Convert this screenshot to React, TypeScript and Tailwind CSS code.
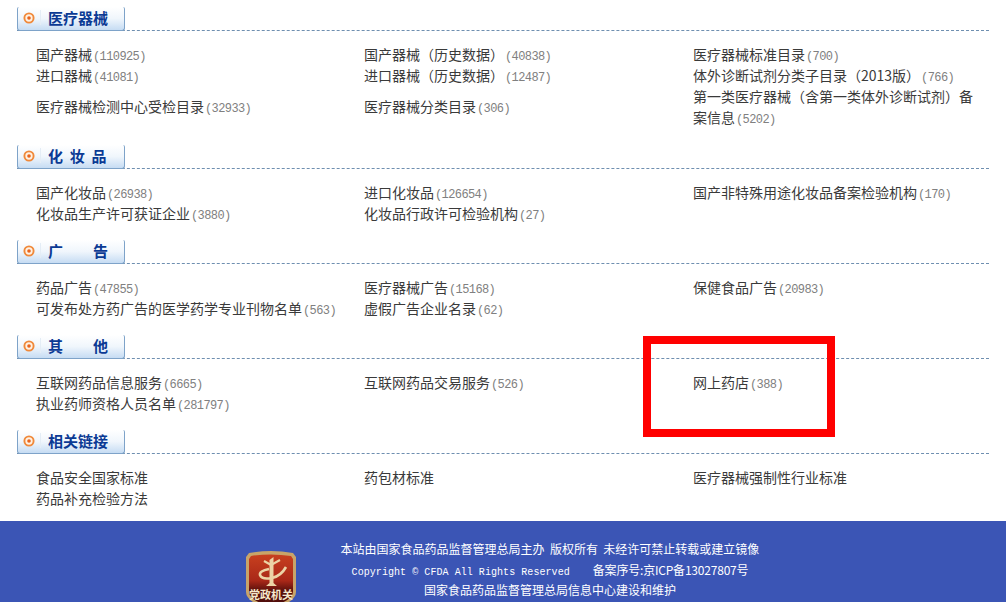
const cjk = "font-['Noto_Sans_CJK_SC','Liberation_Sans',sans-serif]";

type Item = { t: string; n?: string };
type Section = { title: string; rows: Item[][] };

const sections: Section[] = [
  {
    title: "医疗器械",
    rows: [
      [{ t: "国产器械", n: "(110925)" }, { t: "国产器械（历史数据）", n: "(40838)" }, { t: "医疗器械标准目录", n: "(700)" }],
      [{ t: "进口器械", n: "(41081)" }, { t: "进口器械（历史数据）", n: "(12487)" }, { t: "体外诊断试剂分类子目录（2013版）", n: "(766)" }],
      [{ t: "医疗器械检测中心受检目录", n: "(32933)" }, { t: "医疗器械分类目录", n: "(306)" }, { t: "第一类医疗器械（含第一类体外诊断试剂）备案信息", n: "(5202)" }],
    ],
  },
  {
    title: "化  妆  品",
    rows: [
      [{ t: "国产化妆品", n: "(26938)" }, { t: "进口化妆品", n: "(126654)" }, { t: "国产非特殊用途化妆品备案检验机构", n: "(170)" }],
      [{ t: "化妆品生产许可获证企业", n: "(3880)" }, { t: "化妆品行政许可检验机构", n: "(27)" }, { t: "" }],
    ],
  },
  {
    title: "广　　告",
    rows: [
      [{ t: "药品广告", n: "(47855)" }, { t: "医疗器械广告", n: "(15168)" }, { t: "保健食品广告", n: "(20983)" }],
      [{ t: "可发布处方药广告的医学药学专业刊物名单", n: "(563)" }, { t: "虚假广告企业名录", n: "(62)" }, { t: "" }],
    ],
  },
  {
    title: "其　　他",
    rows: [
      [{ t: "互联网药品信息服务", n: "(6665)" }, { t: "互联网药品交易服务", n: "(526)" }, { t: "网上药店", n: "(388)" }],
      [{ t: "执业药师资格人员名单", n: "(281797)" }, { t: "" }, { t: "" }],
    ],
  },
  {
    title: "相关链接",
    rows: [
      [{ t: "食品安全国家标准" }, { t: "药包材标准" }, { t: "医疗器械强制性行业标准" }],
      [{ t: "药品补充检验方法" }, { t: "" }, { t: "" }],
    ],
  },
];

function Tab({ title }: { title: string }) {
  return (
    <div className="h-[24px] ml-[17px] w-[972px] border-b border-dashed border-[#6f8fb0] flex">
      <div className="w-[108px] h-[24px] pb-[2px] flex items-center rounded-t-[2px] rounded-b-[3px] border-x border-b border-[#7ea3c9] bg-gradient-to-b from-white via-[#f0f6fc] to-[#c6dcf3]">
        <svg width="12" height="12" viewBox="0 0 12 12" className="ml-[5px] shrink-0">
          <circle cx="6" cy="6" r="4.6" fill="#fff1e2" stroke="#f0893a" strokeWidth="1.9" />
          <circle cx="6" cy="6" r="1.8" fill="#e8641e" />
        </svg>
        <div className="ml-[5px] w-px h-[15px] bg-[#e4edf6] shrink-0" />
        <span className="ml-[7px] text-[15px] font-bold text-[#0b3a94] whitespace-pre leading-none">{title}</span>
      </div>
    </div>
  );
}

function Entry({ item }: { item: Item }) {
  return (
    <div className="text-[14px] leading-[20.5px] text-[#3a3a3a] self-center">
      {item.t}
      {item.n && (
        <span className="ml-[1px] font-['Liberation_Mono',monospace] text-[12px] leading-none tracking-[-0.6px] text-[#808080]">
          {item.n}
        </span>
      )}
    </div>
  );
}

function Block({ s }: { s: Section }) {
  return (
    <section className="pb-[17px] first:pb-[18px]">
      <Tab title={s.title} />
      <div className="mt-[13px] pl-[36px] grid grid-cols-[328px_329px_285px] [&>*:nth-child(n+7)]:mt-[1px]">
        {s.rows.flat().map((item, i) => (
          <Entry key={i} item={item} />
        ))}
      </div>
    </section>
  );
}

function Badge() {
  return (
    <svg width="52" height="60" viewBox="0 0 52 60" className="shrink-0">
      <defs>
        <linearGradient id="bd" x1="0" y1="0" x2="0" y2="1">
          <stop offset="0" stopColor="#c8401f" />
          <stop offset="0.5" stopColor="#a92818" />
          <stop offset="0.68" stopColor="#5e110d" />
          <stop offset="1" stopColor="#4a0c0a" />
        </linearGradient>
      </defs>
      <path d="M4 3 Q26 -1 48 3 L51 7 V42 Q51 52 26 60 Q1 52 1 42 V7 Z" fill="#c8a469" />
      <path d="M6 6 Q26 3 46 6 L48 9 V42 Q48 50 26 57 Q4 50 4 42 V9 Z" fill="url(#bd)" />
      <path d="M24.5 10 L28.5 7 V33 L32 36 H21 L24.5 33 Z" fill="#ecd4a6" />
      <path d="M19 11 L26 15 L35 10" fill="none" stroke="#ecd4a6" strokeWidth="2.2" />
      <path d="M24 19 Q14 21 15 25 Q17 30 27 28 Q36 26 41 17" fill="none" stroke="#ecd4a6" strokeWidth="2.6" />
      <text x="26" y="49" textAnchor="middle" fontSize="11" fontWeight="700" fill="#f5e9cc" fontFamily="'Noto Sans CJK SC',sans-serif">党政机关</text>
    </svg>
  );
}

export default function App() {
  return (
    <div className={`relative w-[1006px] h-[602px] overflow-hidden bg-white flex flex-col ${cjk}`}>
      <main className="pt-[7px] h-[521px] shrink-0">
        {sections.map((s) => (
          <Block key={s.title} s={s} />
        ))}
      </main>
      <footer className="flex-1 overflow-hidden bg-[#3b55b5] flex pl-[245px] text-white">
        <div className="pt-[29px]">
          <Badge />
        </div>
        <div className="ml-[43px] w-[420px] pt-[18px] text-center text-[12px] leading-[20.5px]">
          <div>本站由国家食品药品监督管理总局主办&nbsp;&nbsp;版权所有&nbsp;&nbsp;未经许可禁止转载或建立镜像</div>
          <div>
            <span className="font-['Liberation_Mono',monospace] text-[10px] leading-none tracking-[0.06px]">Copyright © CFDA All Rights Reserved</span>
            <span className="ml-[23px] tracking-[-0.2px]">备案序号:京ICP备13027807号</span>
          </div>
          <div>国家食品药品监督管理总局信息中心建设和维护</div>
        </div>
      </footer>
      <div className="absolute left-[643px] top-[336px] w-[192px] h-[101px] border-[8px] border-[#ff0000]" />
    </div>
  );
}
